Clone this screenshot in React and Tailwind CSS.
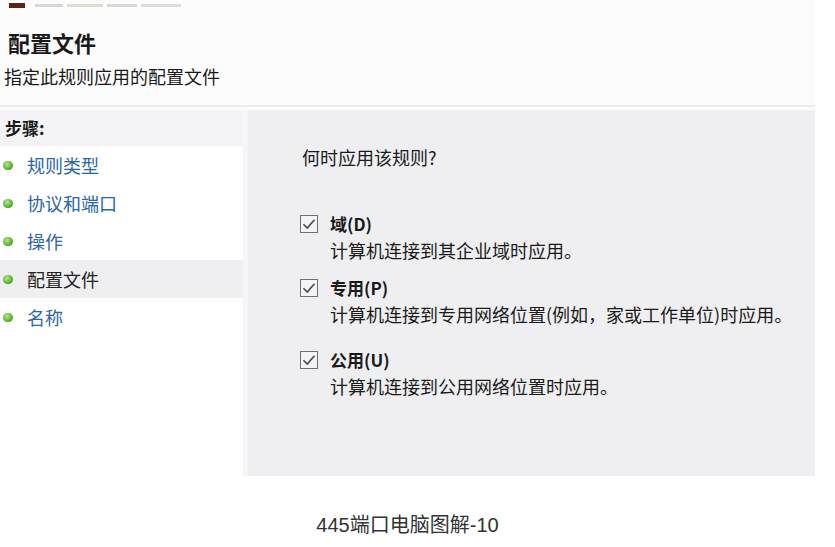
import React from 'react';

const steps = [
  { label: '规则类型' },
  { label: '协议和端口' },
  { label: '操作' },
  { label: '配置文件', active: true },
  { label: '名称' },
];

const profiles = [
  { name: '域', key: 'D', desc: '计算机连接到其企业域时应用。', gap: 'mt-0' },
  { name: '专用', key: 'P', desc: '计算机连接到专用网络位置(例如，家或工作单位)时应用。', gap: 'mt-[12px]' },
  { name: '公用', key: 'U', desc: '计算机连接到公用网络位置时应用。', gap: 'mt-[20px]' },
];

function CheckBox() {
  return (
    <svg width="18" height="18" viewBox="0 0 18 18" className="shrink-0">
      <rect x="0.5" y="0.5" width="17" height="17" fill="#f4f3f5" stroke="#707070" />
      <path d="M3.5 9.2 L7.2 13 L14.5 4.8" fill="none" stroke="#4a4a4a" strokeWidth="1.6" />
    </svg>
  );
}

function Bullet() {
  return (
    <span className="w-[10px] h-[9px] rounded-full shrink-0 bg-[radial-gradient(circle_at_40%_35%,#b8e88a,#4fae2a_65%,#35861c)]" />
  );
}

export default function App() {
  return (
    <div className="w-[835px] h-[547px] bg-white text-[#1a1a1a] font-['Noto_Sans_CJK_SC',sans-serif] overflow-hidden">
      <div className="w-[815px] bg-[#fdfcfd]">
        {/* cut-off window title, only the bottom edge shows */}
        <div className="h-[10px] flex items-start gap-[10px] pl-[9px]">
          <span className="mt-[3px] w-[16px] h-[5px] bg-[#5a2418]" />
          <div className="mt-[4px] flex gap-[4px] blur-[0.7px]">
            <span className="w-[28px] h-[3px] bg-[#d9d6d4]" />
            <span className="w-[36px] h-[3px] bg-[#e0dcd0]" />
            <span className="w-[30px] h-[3px] bg-[#d9d6d4]" />
            <span className="w-[40px] h-[3px] bg-[#dedbd8]" />
          </div>
        </div>

        {/* header */}
        <div className="pl-[8px] mt-[17px] text-[22px] leading-[30px] font-bold">配置文件</div>
        <div className="pl-[4px] mt-[7px] text-[18px] leading-[24px]">指定此规则应用的配置文件</div>
        <div className="mt-[17px] h-[2px] bg-[#ebeaec]" />
        <div className="h-[3px]" />

        {/* body */}
        <div className="flex h-[366px]">
          <div className="w-[248px] bg-white border-r-[5px] border-[#f6f5f7] flex flex-col">
            <div className="h-[36px] bg-[#f3f2f4] flex items-center pl-[5px] text-[17px] font-bold">步骤:</div>
            {steps.map((s) => (
              <div
                key={s.label}
                className={`h-[38px] flex items-center gap-[14px] pl-[3px] text-[18px] ${
                  s.active ? 'bg-[#efeef0] text-[#222]' : 'text-[#2a66a8]'
                }`}
              >
                <Bullet />
                <span>{s.label}</span>
              </div>
            ))}
          </div>

          <div className="flex-1 bg-[#efeef0] pl-[54px] pt-[35px]">
            <div className="text-[18px] leading-[24px]">何时应用该规则?</div>
            <div className="mt-[42px] flex flex-col">
              {profiles.map((p) => (
                <div key={p.key} className={p.gap}>
                  <div className="flex items-center gap-[12px] h-[26px] -ml-[2px]">
                    <CheckBox />
                    <span className="text-[17px] font-bold">
                      {p.name}({p.key})
                    </span>
                  </div>
                  <div className="pl-[28px] text-[18px] leading-[26px]">{p.desc}</div>
                </div>
              ))}
            </div>
          </div>
        </div>
      </div>

      {/* caption */}
      <div className="w-[815px] mt-[34px] text-center text-[20px] leading-[30px] text-[#333] font-['Liberation_Sans','Noto_Sans_CJK_SC',sans-serif]">
        445端口电脑图解-10
      </div>
    </div>
  );
}
